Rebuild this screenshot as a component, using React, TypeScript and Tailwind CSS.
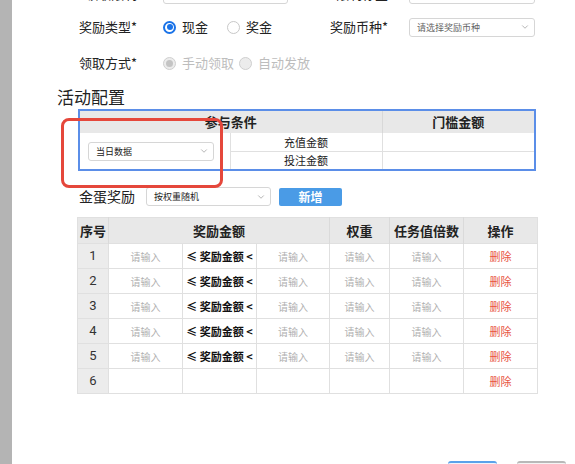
import { ChevronDown } from "lucide-react";

const rows = [1, 2, 3, 4, 5, 6];

function Select({ text, placeholder, className }: { text: string; placeholder?: boolean; className: string }) {
  return (
    <div
      className={`flex items-center justify-between rounded-[3px] border border-[#d6d6d6] bg-white pl-[7px] pr-[4px] ${className}`}
    >
      <span className={`text-[9px] leading-none ${placeholder ? "text-[#666]" : "text-[#222]"}`}>{text}</span>
      <ChevronDown size={10} strokeWidth={1.5} className="text-[#8a8a8a]" />
    </div>
  );
}

function Radio({ checked, disabled }: { checked?: boolean; disabled?: boolean }) {
  if (disabled) {
    return (
      <span className="flex h-[13px] w-[13px] shrink-0 items-center justify-center rounded-full border border-[#cfcfcf] bg-[#ececec]">
        {checked && <span className="h-[7px] w-[7px] rounded-full bg-[#c4c4c4]" />}
      </span>
    );
  }
  return checked ? (
    <span className="flex h-[13px] w-[13px] shrink-0 items-center justify-center rounded-full border-2 border-[#1a73e8] bg-white">
      <span className="h-[6px] w-[6px] rounded-full bg-[#1a73e8]" />
    </span>
  ) : (
    <span className="block h-[13px] w-[13px] shrink-0 rounded-full border border-[#c8c8c8] bg-white" />
  );
}

function FormLabel({ children, className = "w-[70px]" }: { children: React.ReactNode; className?: string }) {
  return <div className={`text-right text-[13px] leading-[20px] text-[#222] ${className}`}>{children}</div>;
}

export default function App() {
  return (
    <div className="flex h-[464px] w-[575px] overflow-hidden bg-white font-['Noto_Sans_CJK_SC','Noto_Sans',sans-serif]">
      <div className="w-[12px] shrink-0 bg-[#b4b4b4]" />

      <div className="relative flex-1 pl-[55px]">
        {/* reward settings form */}
        <div className="mt-[-16px] flex h-[20px] items-center">
          <FormLabel>领取限制</FormLabel>
          <div className="ml-[26px] flex h-[20px] w-[125px] items-center rounded-[3px] border border-[#d6d6d6] pl-[7px] text-[9px] text-[#222]">
            不限
          </div>
          <FormLabel className="w-[100px]">限制标签</FormLabel>
          <div className="ml-[21px] flex h-[20px] w-[126px] items-center rounded-[3px] border border-[#d6d6d6] pl-[7px] text-[9px] text-[#999]">
            请选择限制标签
          </div>
        </div>

        <div className="mt-[13px] flex h-[20px] items-center">
          <FormLabel>奖励类型*</FormLabel>
          <div className="ml-[26px] flex w-[125px] items-center text-[13px] text-[#222]">
            <Radio checked />
            <span className="ml-[6px]">现金</span>
            <span className="ml-[19px] flex">
              <Radio />
            </span>
            <span className="ml-[6px]">奖金</span>
          </div>
          <FormLabel className="w-[100px]">奖励币种*</FormLabel>
          <Select text="请选择奖励币种" placeholder className="ml-[21px] h-[19px] w-[126px]" />
        </div>

        <div className="mt-[16px] flex h-[20px] items-center">
          <FormLabel>领取方式*</FormLabel>
          <div className="ml-[26px] flex items-center text-[13px] text-[#bdbdbd]">
            <Radio checked disabled />
            <span className="ml-[6px]">手动领取</span>
            <span className="ml-[5px] flex">
              <Radio disabled />
            </span>
            <span className="ml-[6px]">自动发放</span>
          </div>
        </div>

        <h2 className="ml-[-10px] mt-[12px] text-[17px] leading-[24px] text-[#222]">活动配置</h2>

        {/* participation conditions */}
        <div className="ml-[11px] w-[458px] border-2 border-[#5b8ee8]">
          <table className="w-full table-fixed border-collapse text-[11px] text-[#222]">
            <colgroup>
              <col className="w-[150px]" />
              <col className="w-[152px]" />
              <col className="w-[152px]" />
            </colgroup>
            <thead>
              <tr className="h-[22px] bg-[#e8e8e8] text-[13px] font-bold">
                <th colSpan={2} className="border-r border-[#d8d8d8]">参与条件</th>
                <th>门槛金额</th>
              </tr>
            </thead>
            <tbody>
              <tr className="h-[18px]">
                <td rowSpan={2} className="border-r border-[#e0e0e0] px-[8px]">
                  <Select text="当日数据" className="h-[19px] w-[126px]" />
                </td>
                <td className="border-b border-r border-[#e0e0e0] text-center">充值金额</td>
                <td className="border-b border-[#e0e0e0]" />
              </tr>
              <tr className="h-[18px]">
                <td className="border-r border-[#e0e0e0] text-center">投注金额</td>
                <td />
              </tr>
            </tbody>
          </table>
        </div>

        {/* highlight ring over the data select */}
        <div className="absolute left-[49px] top-[118px] h-[70px] w-[162px] rounded-[8px] border-[3px] border-[#e5473b]" />

        <div className="mt-[16px] flex h-[19px] items-center">
          <span className="ml-[12px] w-[67px] text-[14px] leading-[19px] text-[#222]">金蛋奖励</span>
          <Select text="按权重随机" className="h-[19px] w-[125px]" />
          <button className="ml-[8px] h-[18px] w-[63px] rounded-[2px] bg-[#4a9be6] text-[12px] font-bold leading-[18px] text-white">
            新增
          </button>
        </div>

        {/* golden egg reward table */}
        <table className="ml-[10px] mt-[11px] w-[460px] table-fixed border-collapse border border-[#e0e0e0] text-center">
          <colgroup>
            <col className="w-[31px]" />
            <col className="w-[74px]" />
            <col className="w-[74px]" />
            <col className="w-[73px]" />
            <col className="w-[60px]" />
            <col className="w-[74px]" />
            <col className="w-[74px]" />
          </colgroup>
          <thead>
            <tr className="h-[26px] bg-[#e8e8e8] text-[13px] font-bold text-[#222]">
              <th className="border-r border-[#dadada]">序号</th>
              <th colSpan={3} className="border-r border-[#dadada]">奖励金额</th>
              <th className="border-r border-[#dadada]">权重</th>
              <th className="border-r border-[#dadada]">任务值倍数</th>
              <th>操作</th>
            </tr>
          </thead>
          <tbody>
            {rows.map((n) => (
              <tr key={n} className="h-[25px] text-[10px]">
                <td className="border border-[#e0e0e0] bg-[#ececec] font-['Roboto',sans-serif] text-[13px] text-[#333]">
                  {n}
                </td>
                <td className="border border-[#e0e0e0] text-[#b0b0b0]">{n < 6 ? "请输入" : ""}</td>
                <td className="border border-[#e0e0e0] text-[11px] font-bold text-[#111]">
                  {n < 6 ? "≤ 奖励金额 <" : ""}
                </td>
                <td className="border border-[#e0e0e0] text-[#b0b0b0]">{n < 6 ? "请输入" : ""}</td>
                <td className="border border-[#e0e0e0] text-[#b0b0b0]">{n < 6 ? "请输入" : ""}</td>
                <td className="border border-[#e0e0e0] text-[#b0b0b0]">{n < 6 ? "请输入" : ""}</td>
                <td className="border border-[#e0e0e0] text-[11px] text-[#e8533f]">删除</td>
              </tr>
            ))}
          </tbody>
        </table>

        {/* dialog footer buttons */}
        <div className="mt-[67px] flex justify-end gap-[20px] pr-[9px]">
          <button className="h-[24px] w-[49px] rounded-[3px] border-t-2 border-[#5aa2ea] bg-[#eef5fd]" />
          <button className="h-[24px] w-[49px] rounded-[3px] border-t-2 border-[#b8b8b8] bg-[#f4f4f4]" />
        </div>
      </div>
    </div>
  );
}
